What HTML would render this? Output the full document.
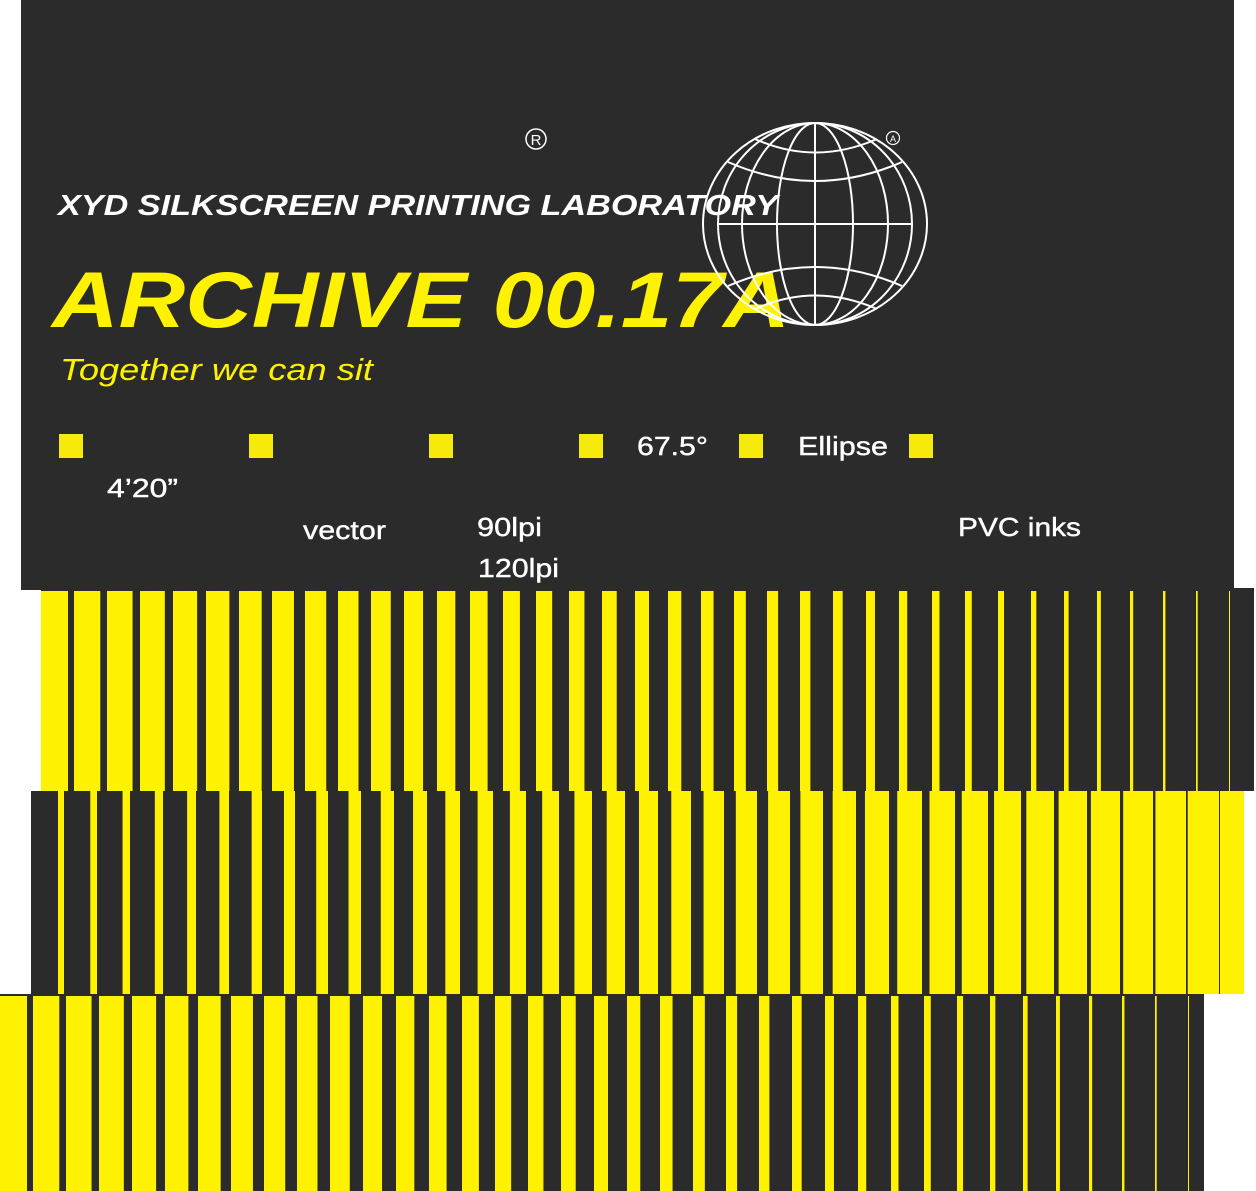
<!DOCTYPE html>
<html><head><meta charset="utf-8"><style>
html,body{margin:0;padding:0;background:#fff;}
body{width:1256px;height:1191px;position:relative;overflow:hidden;}
svg{position:absolute;left:0;top:0;}
text{font-family:"Liberation Sans",sans-serif;}
</style></head><body>
<svg width="1256" height="1191" viewBox="0 0 1256 1191" xmlns="http://www.w3.org/2000/svg">
<rect x="21" y="0" width="1213" height="590" fill="#2b2b2b"/>
<rect x="41" y="588" width="1213" height="203" fill="#2b2b2b"/>
<rect x="31" y="791" width="1213" height="203" fill="#2b2b2b"/>
<rect x="0" y="994" width="1204" height="197" fill="#2b2b2b"/>
<g id="stripes"></g>
<text x="58" y="215" font-size="29" font-weight="bold" font-style="italic" fill="#fff" textLength="720" lengthAdjust="spacingAndGlyphs">XYD SILKSCREEN PRINTING LABORATORY</text>
<text x="52" y="327" font-size="79" font-weight="bold" font-style="italic" fill="#fff200" textLength="738" lengthAdjust="spacingAndGlyphs">ARCHIVE 00.17A</text>
<text x="60" y="380" font-size="31" font-style="italic" fill="#fff200" textLength="313" lengthAdjust="spacingAndGlyphs">Together we can sit</text>
<g fill="none" stroke="#fff" stroke-width="2">
<ellipse cx="815" cy="224" rx="112" ry="101"/>
<line x1="815" y1="123" x2="815" y2="325"/>
<line x1="718" y1="224" x2="911" y2="224"/>
<ellipse cx="815" cy="224" rx="38" ry="101"/>
<ellipse cx="815" cy="224" rx="73" ry="101"/>
<ellipse cx="815" cy="224" rx="97" ry="101"/>
<path d="M755 139 Q815 166 877 139"/>
<path d="M728 162 Q815 200 902 162"/>
<path d="M755 309 Q815 282 877 309"/>
<path d="M728 286 Q815 248 902 286"/>
<circle cx="536" cy="139" r="10" stroke-width="1.5"/>
<circle cx="893" cy="138" r="6.5" stroke-width="1.2"/>
</g>
<text x="536" y="145" font-size="15" fill="#fff" text-anchor="middle">R</text>
<text x="893" y="142" font-size="9" fill="#fff" text-anchor="middle">A</text>
<g fill="#f5ea0a">
<rect x="59" y="434" width="24" height="24"/><rect x="249" y="434" width="24" height="24"/>
<rect x="429" y="434" width="24" height="24"/><rect x="579" y="434" width="24" height="24"/>
<rect x="739" y="434" width="24" height="24"/><rect x="909" y="434" width="24" height="24"/>
</g>
<g fill="#fff" font-size="26" lengthAdjust="spacingAndGlyphs" stroke="#fff" stroke-width="0.4">
<text x="637" y="455" textLength="71" lengthAdjust="spacingAndGlyphs">67.5°</text>
<text x="798" y="455" textLength="90" lengthAdjust="spacingAndGlyphs">Ellipse</text>
<text x="107" y="497" textLength="71" lengthAdjust="spacingAndGlyphs">4’20”</text>
<text x="303" y="539" textLength="83" lengthAdjust="spacingAndGlyphs">vector</text>
<text x="477" y="536" textLength="65" lengthAdjust="spacingAndGlyphs">90lpi</text>
<text x="478" y="577" textLength="81" lengthAdjust="spacingAndGlyphs">120lpi</text>
<text x="958" y="536" textLength="123" lengthAdjust="spacingAndGlyphs">PVC inks</text>
</g>
</svg>
<script>
(function(){
var g=document.getElementById('stripes'),ns='http://www.w3.org/2000/svg',Y='#fff200';
function r(x,y,w,h){if(w<=0)return;var e=document.createElementNS(ns,'rect');e.setAttribute('x',x);e.setAttribute('y',y);e.setAttribute('width',w);e.setAttribute('height',h);e.setAttribute('fill',Y);g.appendChild(e);}
var i,w,x;
for(i=0;i<37;i++){w=27-26*i/36;x=41+33*i;if(x>=1254)break;r(x,591,Math.min(w,1254-x),200);}
for(i=0;i<37;i++){var d=27-26*i/36;x=31+33*i+d;var e=Math.min(31+33*(i+1),1244);if(x<e)r(x,791,e-x,203);}
for(i=0;i<37;i++){w=27-26*i/36;x=0+33*i;if(x>=1204)break;r(x,996,Math.min(w,1204-x),195);}
})();
</script>
</body></html>
